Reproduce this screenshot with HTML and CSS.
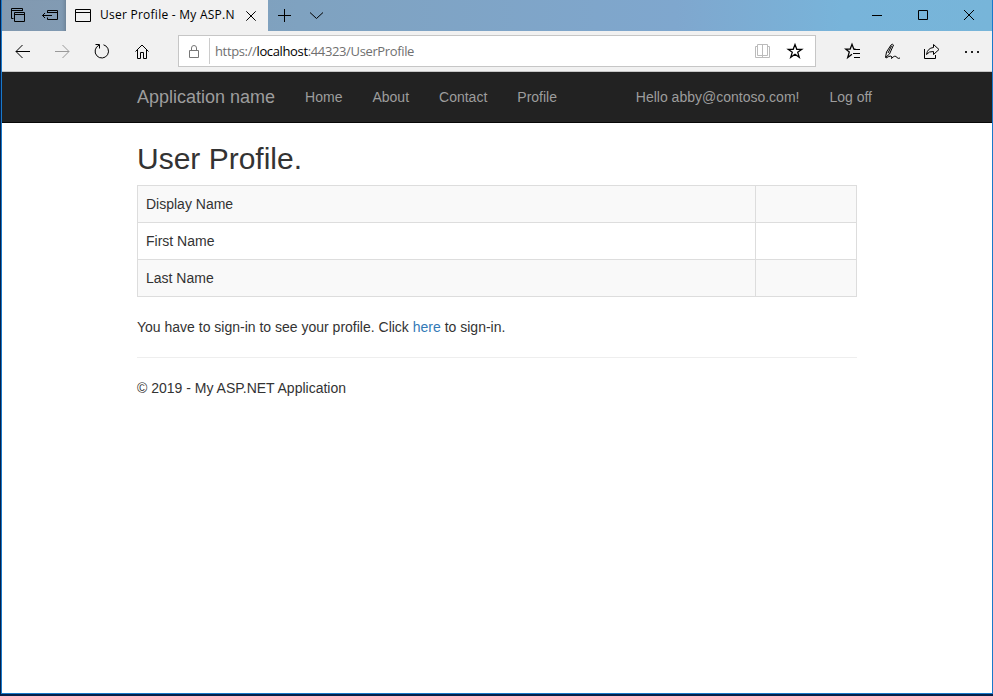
FILE: index.html
```html
<!DOCTYPE html>
<html lang="en">
<head>
<meta charset="utf-8">
<title>User Profile - My ASP.NET Application</title>
<link rel="stylesheet" href="styles.css">
</head>
<body>
<div class="window">
  <div class="tabbar">
    <div class="tab-tools">
      <svg width="64" height="31" viewBox="0 0 64 31"><path d="M9.500 18.500V8.500H20.500V11M9.500 10.500H20.500M11.500 18.500H9.500M12.500 12.500H22.500V21.500H12.500ZM12.500 14.500H22.500"/><path d="M45.500 13V10.500H55.500V19.500H45.500V17.500M45.500 12.500H55.500M40.500 15.500H50M43 13L40.500 15.500L43 18"/></svg>
    </div>
    <div class="tab">
      <svg class="page-icon" width="16" height="13" viewBox="0 0 16 13"><path d="M.5.5H15.500V12.500H.5ZM.5 3.500H15.500"/></svg>
      <span class="tab-title">User Profile - My ASP.N</span>
      <svg class="tab-close" width="10" height="10" viewBox="0 0 10 10"><path d="M.3.3L9.700 9.700M9.700.3L.3 9.700"/></svg>
    </div>
    <svg class="tab-actions" width="60" height="31" viewBox="0 0 60 31"><path d="M10 15.500H23M16.500 9V22"/><path class="thin" d="M42 12.500L48.500 18.500L55 12.500"/></svg>
    <svg class="window-controls" width="132" height="31" viewBox="0 0 132 31"><path d="M12 15.500H22M58.500 10.500H67.500V19.500H58.500ZM104 10L114 20M114 10L104 20"/></svg>
  </div>
  <div class="toolbar">
    <svg class="nav-icons" width="176" height="40" viewBox="0 0 176 40">
      <path d="M28 20.500H14M20.500 14L14 20.500L20.500 27"/>
      <path class="muted" d="M53 20.500H67M60.500 14L67 20.500L60.500 27"/>
      <path d="M97 14.200A6.700 6.700 0 1 0 101.500 13.800M93.500 13.500H97.500V17.500"/>
      <path d="M133.500 20.500L140 14L146.500 20.500M135.500 19V27.500H138.500V21.500H141.500V27.500H144.500V19"/>
    </svg>
    <div class="address">
      <svg class="lock" width="10" height="13" viewBox="0 0 10 13"><path d="M.5 5.500H9.500V12.500H.5ZM2.500 5.500V3A2.500 2.500 0 0 1 7.500 3V5.500"/></svg>
      <div class="url">https://<b>localhost</b>:44323/UserProfile</div>
      <svg class="address-icons" width="60" height="30" viewBox="0 0 60 30"><path class="book" d="M2.500 10.500H.5V21.500H14.500V10.500H12.500M2.500 8.500H12.500V19.500H2.500ZM7.500 8.500V21"/><path class="bold" d="M40 8.500L41.800 13.300H46.800L42.700 16.300L44.300 21.300L40 18.200L35.700 21.300L37.300 16.300L33.200 13.300H38.200Z"/></svg>
    </div>
    <svg class="hub-icons" width="148" height="40" viewBox="0 0 148 40">
      <path class="bold" d="M11.500 18H9.800L8 13.300L6.200 18H1.500L5.300 21L3.700 26.500L8 23.200"/>
      <path d="M10 18.500H16M9 22.500H16M10 26.500H16"/>
      <path d="M41.500 26.500L42.500 21L47 14Q48.500 12.500 49.500 14L45.500 23L41.500 26.500M47.500 15L44 22M42 27Q45 25 47 25Q48.500 25.500 47.500 27.500Q51 23.500 53 26.500Q54 28 56 27"/>
      <path d="M80.500 18V27.500H91.500V24M89.500 13.500L95 18.500L89.500 23.500V20.500Q85 20 82.500 23.500Q83.500 17 89.500 16.500Z"/>
      <path class="dots" d="M121 20h2v2h-2zM127 20h2v2h-2zM133 20h2v2h-2z"/>
    </svg>
  </div>
  <nav class="navbar">
    <a class="brand">Application name</a>
    <a>Home</a><a>About</a><a>Contact</a><a>Profile</a>
    <div class="account"><a>Hello abby@contoso.com!</a><a>Log off</a></div>
  </nav>
  <main>
    <h2>User Profile.</h2>
    <table>
      <tr><td>Display Name</td><td class="value"></td></tr>
      <tr><td>First Name</td><td class="value"></td></tr>
      <tr><td>Last Name</td><td class="value"></td></tr>
    </table>
    <p>You have to sign-in to see your profile. Click <a class="link">here</a> to sign-in.</p>
    <hr>
    <footer>© 2019 - My ASP.NET Application</footer>
  </main>
</div>
</body>
</html>
```
FILE: styles.css
```css
* { box-sizing: border-box; }
html, body { height: 100%; }
body {
  margin: 0;
  padding: 0 0 2px 1px;
  background: #04204a;
  color: #333;
  font: 14px/20px "Liberation Sans", Arial, sans-serif;
  overflow: hidden;
}
svg { display: block; flex: none; fill: none; stroke: #000; stroke-width: 1; }
.bold { stroke-width: 1.25; }
.window {
  height: 694px;
  border: solid #1979ca;
  border-width: 0 1px 1px;
  background: #fff;
}
.tabbar {
  display: flex;
  height: 31px;
  background: linear-gradient(90deg, #8299b0 0, #7fa2c0 30%, #7fa7ce 68%, #78b4da 85%, #77b5d9 100%);
}
.tab-tools { width: 64px; box-shadow: inset -5px 0 4px -4px #66798c; }
.tab {
  display: flex;
  align-items: center;
  width: 202px;
  padding-left: 9px;
  background: #f1f1f1;
}
.page-icon { margin-right: 9px; }
.tab-title {
  width: 136px;
  margin: 0 10px 2px 0;
  color: #000;
  font: 12px/18px "Open Sans", "Noto Sans", sans-serif;
  letter-spacing: .25px;
  white-space: nowrap;
}
.window-controls { margin-left: auto; width: 132px; }
.toolbar {
  display: flex;
  align-items: flex-start;
  height: 41px;
  background: #f1f1f1;
  border-bottom: 1px solid #c6c6c6;
}
.address {
  display: flex;
  flex: none;
  align-items: center;
  width: 638px;
  height: 32px;
  margin-top: 4px;
  padding-left: 10px;
  background: #fff;
  border: 1px solid #c6c6c6;
}
.lock { stroke: #777; }
.url {
  height: 26px;
  margin-left: 10px;
  padding-left: 5px;
  border-left: 1px solid #ccc;
  color: #707070;
  font: 13px/26px "Open Sans", "Noto Sans", sans-serif;
  letter-spacing: -.36px;
  white-space: nowrap;
}
.url b { color: #000; font-weight: 400; }
.address-icons { margin-left: auto; }
.book { stroke: #bbb; }
.muted { stroke: #999; }
.hub-icons { margin-left: 28px; }
.dots { fill: #222; stroke: none; }
.navbar {
  display: flex;
  height: 51px;
  padding: 15px 120px 0 135px;
  background: #222;
  border-bottom: 1px solid #080808;
  color: #9d9d9d;
  white-space: nowrap;
}
.navbar > a { margin-right: 30px; }
.brand { font-size: 18px; }
.account { display: flex; gap: 30px; margin-left: auto; }
main { width: 720px; margin-left: 135px; padding-top: 19px; }
h2 { margin: 0 0 10px; font-size: 30px; line-height: 33px; font-weight: 400; }
table { width: 100%; border-collapse: collapse; table-layout: fixed; }
td { height: 37px; padding: 8px; border: 1px solid #ddd; }
tr:nth-child(odd) td { background: #f9f9f9; }
.value { width: 101px; }
p { margin: 20px 0; }
.link { color: #337ab7; }
hr { height: 1px; margin: 20px 0; border: 0; background: #eee; }
```
